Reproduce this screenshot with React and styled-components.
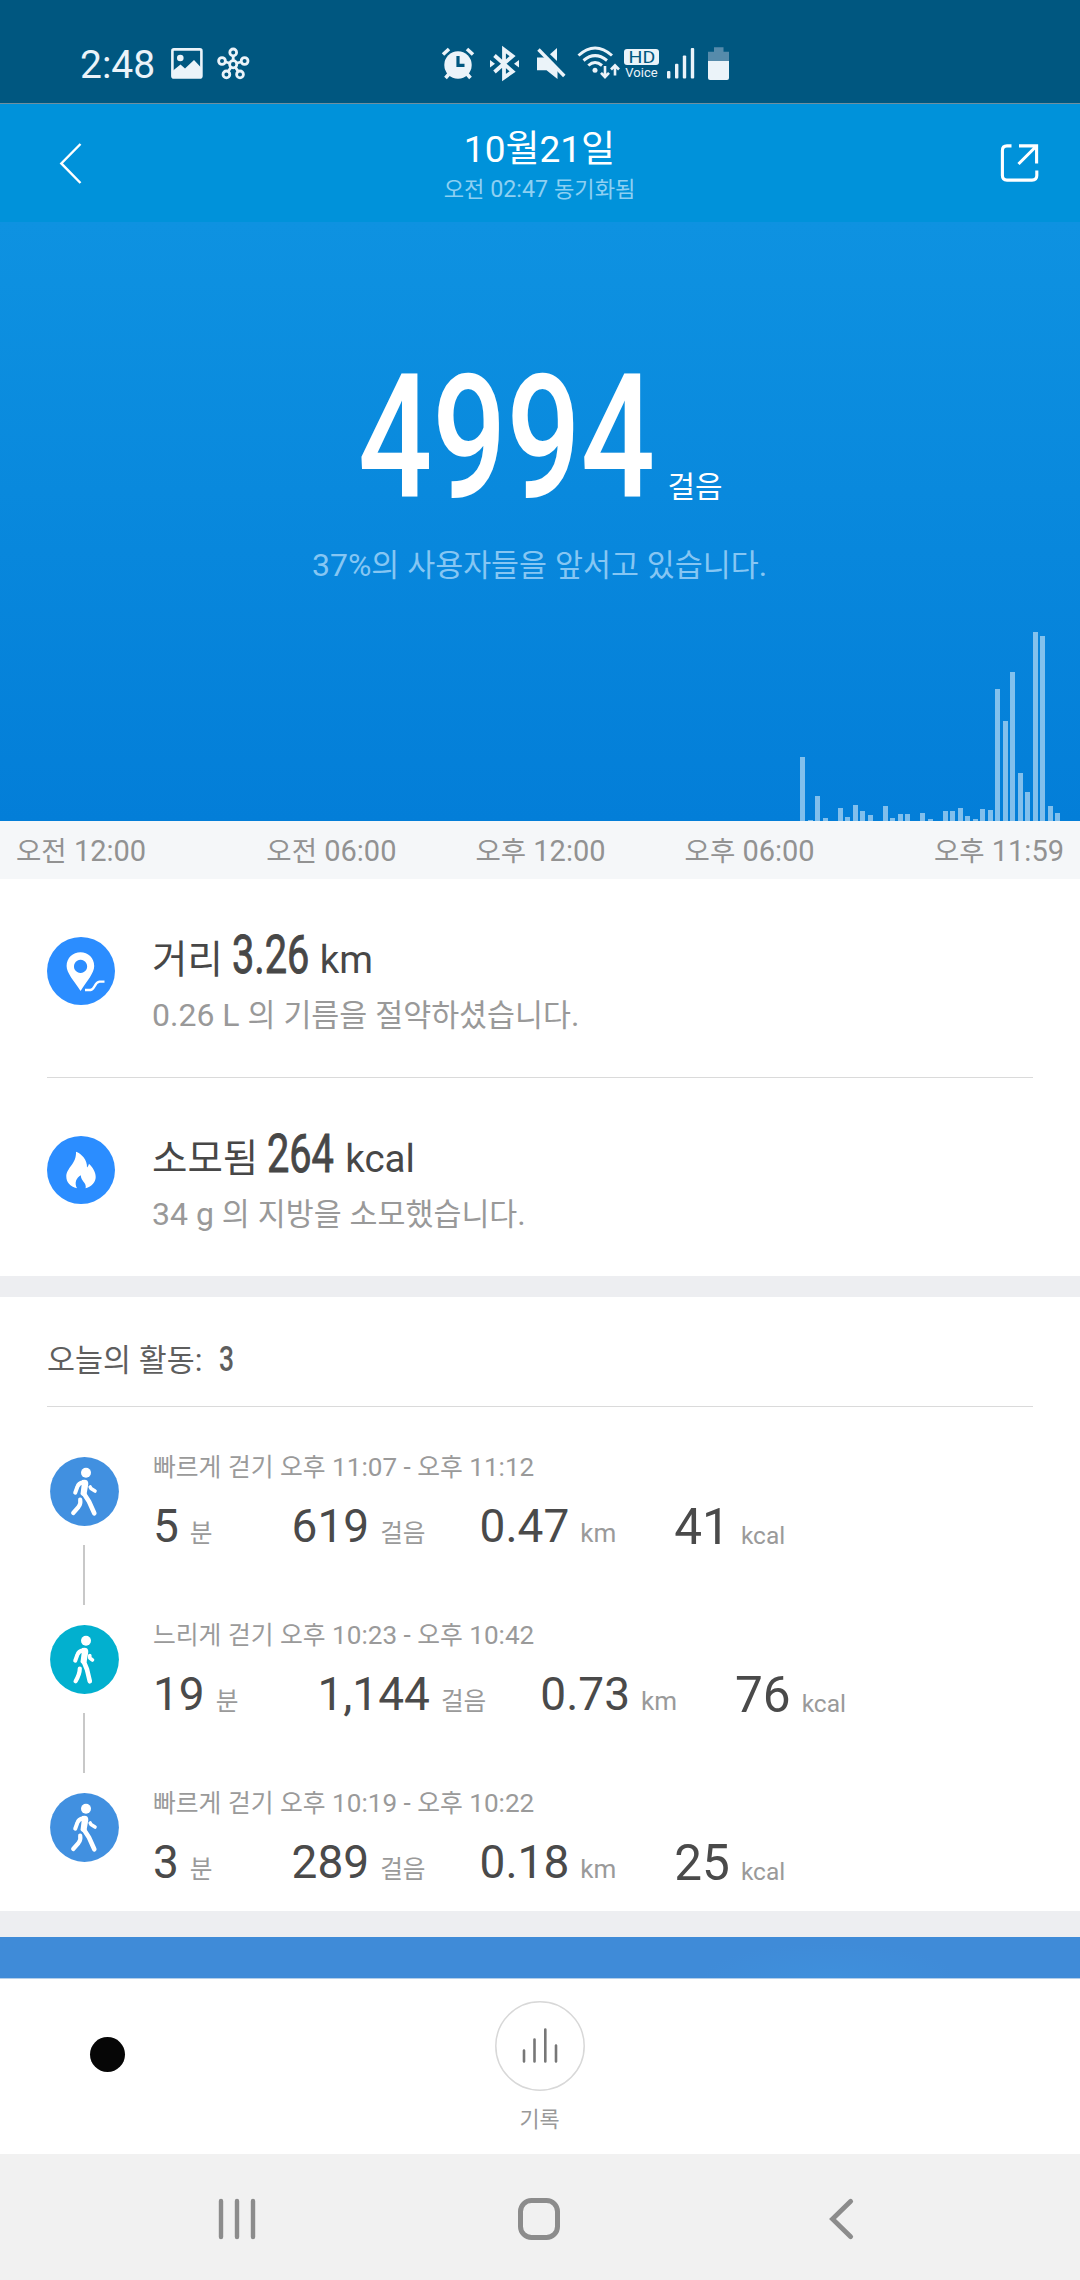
import React from 'react';
import styled, { createGlobalStyle } from 'styled-components';

const GlobalStyle = createGlobalStyle`
  * { box-sizing: border-box; }
  body {
    margin: 0;
    background: #fff;
    font-family: Roboto, "Noto Sans CJK KR", sans-serif;
  }
  svg { display: block; flex: none; }
`;

const Screen = styled.div`
  width: 1080px;
  height: 2280px;
  display: flex;
  flex-direction: column;
  overflow: hidden;
  white-space: nowrap;
`;

/* hangul sits a little smaller next to the latin digits */
const Hangul = styled.span`
  font-size: 0.95em;
`;

/* tall narrow digits */
const Condensed = styled.span`
  display: inline-block;
  width: ${p => p.$w}px;
  font-weight: 500;
  transform: scaleX(0.755);
  transform-origin: left;
`;

const StatusBar = styled.div`
  height: 104px;
  padding: 25px 0 0 80px;
  display: flex;
  align-items: center;
  background: #005780;
  border-bottom: 1px solid #6f8f9f;
  color: #ebf3f9;
`;

const Clock = styled.div`
  width: 91px;
  padding-top: 2px;
  font-size: 39px;
  line-height: 44px;
`;

const StatusIcon = styled.svg`
  height: 40px;
  margin-left: ${p => p.$gap || 0}px;
`;

const HdVoice = styled.div`
  width: 35px;
  margin-left: 4px;
  display: flex;
  flex-direction: column;
  align-items: center;
  font-size: 13px;
  line-height: 15px;
`;

const HdBadge = styled.div`
  width: 35px;
  height: 16px;
  display: flex;
  justify-content: center;
  border-radius: 3px;
  background: #ebf3f9;
  color: #005780;
  font-size: 16px;
  line-height: 17px;
`;

const Wide = styled.span`
  transform: scaleX(1.22);
`;

const Header = styled.header`
  height: 118px;
  display: grid;
  grid-template-columns: 120px 1fr 120px;
  background: #0092da;
  color: #fff;
`;

const HeaderSide = styled.div`
  display: flex;
  align-items: center;
  padding-left: ${p => p.$left}px;
`;

const HeaderText = styled.div`
  padding: 24px 1px 0 0;
  text-align: center;
`;

const DateTitle = styled.div`
  font-size: 37px;
  line-height: 44px;
`;

const Synced = styled.div`
  font-size: 23.3px;
  line-height: 34px;
  color: #8dd0f2;
`;

const Hero = styled.section`
  height: 599px;
  padding-top: 126px;
  display: flex;
  flex-direction: column;
  align-items: center;
  background: linear-gradient(#0e92e1, #037ed8);
  color: #fff;
`;

const StepCount = styled.div`
  display: flex;
  align-items: baseline;
  gap: 15px;
  padding-left: 1px;
  font-size: 173px;
  line-height: 180px;
`;

const StepUnit = styled.span`
  font-size: 31.5px;
  line-height: 40px;
`;

const HeroNote = styled.div`
  margin-top: 15px;
  padding-right: 1px;
  font-size: 32px;
  line-height: 44px;
  color: #86c6f3;
`;

const Chart = styled.div`
  align-self: stretch;
  height: 190px;
  margin-top: auto;
  padding-right: 20px;
  display: flex;
  justify-content: flex-end;
  align-items: flex-end;
  gap: 2.5px;
`;

const Bar = styled.div`
  width: 5px;
  background: rgba(255, 255, 255, 0.5);
`;

const Axis = styled.div`
  height: 58px;
  padding: 3px 16px 0;
  display: flex;
  justify-content: space-between;
  align-items: center;
  background: #f5f7f9;
  color: #929292;
  font-size: 29px;
  line-height: 40px;
`;

const AxisMiddle = styled.div`
  display: flex;
  gap: 79px;
  padding-left: 1px;
`;

const Metric = styled.div`
  height: ${p => (p.$last ? 198 : 199)}px;
  margin: 0 47px;
  padding-top: 58px;
  display: flex;
  gap: 37px;
  border-bottom: ${p => (p.$last ? 'none' : '1px solid #dadada')};
`;

const MetricBody = styled.div`
  margin-top: -12px;
`;

const MetricTitle = styled.div`
  display: flex;
  align-items: baseline;
  gap: 9px;
  color: #474747;
  font-size: 38.5px;
  line-height: 60px;
`;

const MetricValue = styled(Condensed)`
  font-size: 54px;
  font-weight: 400;
  -webkit-text-stroke: 0.9px #474747;
  transform: scaleX(0.735);
`;

const MetricNote = styled.div`
  margin-top: 5px;
  color: #999;
  font-size: 32px;
  line-height: 40px;
`;

const Band = styled.div`
  height: ${p => p.$h}px;
  flex: none;
  background: #edeef1;
`;

const SectionTitle = styled.div`
  height: 110px;
  margin: 0 47px;
  padding-top: 43px;
  display: flex;
  align-items: baseline;
  gap: 16px;
  border-bottom: 1px solid #dadada;
  color: #5e5e5e;
  font-size: 32px;
  line-height: 40px;
`;

const SectionCount = styled(Condensed)`
  font-size: 35px;
`;

const Activities = styled.div`
  padding-top: 50px;
`;

const Activity = styled.div`
  height: 168px;
  padding-left: 49px;
  display: flex;
  gap: 34px;
  &:last-child { height: 118px; }
`;

const Track = styled.div`
  width: 70px;
  display: flex;
  flex-direction: column;
  align-items: center;
`;

const Connector = styled.div`
  width: 2px;
  height: 60px;
  margin-top: 19px;
  background: #c8c8c8;
`;

const ActivityBody = styled.div`
  margin-top: -5px;
`;

const ActivityName = styled.div`
  color: #9a9a9a;
  font-size: 26.1px;
  line-height: 30px;
`;

const Stats = styled.div`
  margin-top: 15px;
  display: flex;
  align-items: flex-start;
`;

const Stat = styled.div`
  margin: ${p => p.$top || 0}px ${p => p.$after || 0}px 0 0;
  display: flex;
  align-items: baseline;
  gap: 11px;
  color: #4a4a4a;
  font-size: ${p => p.$size || 46}px;
  line-height: 56px;
`;

const StatUnit = styled.span`
  color: #9a9a9a;
  font-size: ${p => p.$size || 26}px;
`;

const Promo = styled.div`
  height: 42px;
  flex: none;
  background: radial-gradient(ellipse 130px 36px at 830px 42px, #3f90dc, #3f8bd8);
  border-bottom: 1px solid #b3cfea;
`;

const Footer = styled.div`
  height: 175px;
  display: grid;
  grid-template-columns: 1fr 120px 1fr;
  padding-right: 1px;
  background: #fff;
`;

const FooterSide = styled.div`
  padding: 58px 0 0 90px;
`;

const Dot = styled.div`
  width: 35px;
  height: 35px;
  border-radius: 50%;
  background: #060606;
`;

const HistoryButton = styled.div`
  padding-top: 22px;
  display: flex;
  flex-direction: column;
  align-items: center;
  color: #999;
  font-size: 23px;
  line-height: 30px;
`;

const HistoryLabel = styled.div`
  margin-top: 14px;
`;

const NavBar = styled.nav`
  height: 126px;
  padding: 3px 2px 0 0;
  display: flex;
  justify-content: center;
  align-items: center;
  gap: 258px;
  background: #f1f1f1;
`;

// wraps every hangul run of a label
const mixed = text =>
  text.split(/([가-힣]+)/).map((part, i) => (i % 2 ? <Hangul key={i}>{part}</Hangul> : part));

const bars = [
  64, 1, 25, 3, 0, 13, 4, 16.5, 10, 6, 0, 15.5, 3, 7, 7, 0, 8, 2, 0, 10.5, 10.5, 13,
  5, 2, 12, 11, 132, 100, 149.5, 48.5, 29, 189, 185, 15, 8,
];

const activities = [
  { name: '빠르게 걷기 오후 11:07 - 오후 11:12', min: '5', steps: '619', km: '0.47', kcal: '41' },
  { name: '느리게 걷기 오후 10:23 - 오후 10:42', min: '19', steps: '1,144', km: '0.73', kcal: '76', slow: true },
  { name: '빠르게 걷기 오후 10:19 - 오후 10:22', min: '3', steps: '289', km: '0.18', kcal: '25' },
];

function Walker({ slow }) {
  return (
    <svg width="69" height="69" viewBox="0 0 69 69" fill="none" stroke="#fff" strokeLinecap="round" strokeLinejoin="round">
      <circle cx="34.5" cy="34.5" r="34.4" fill={slow ? '#02b0cf' : '#4190e0'} stroke="none" />
      <circle cx="36" cy="15.7" r="5" fill="#fff" stroke="none" />
      <path d="M32 23 Q38.5 21.5 38.3 27 L36.6 37 Q33 41 30.5 37 L31.5 29 Z" fill="#fff" stroke="none" />
      <path d="M33 25.2 Q28.5 26 27.3 30 L25.2 35.7" strokeWidth="4" />
      {slow ? (
        <>
          <path d="M39.8 30.5 V33 L42.5 35" strokeWidth="3.6" />
          <path d="M33.5 36 L37 44.5 L39.8 56.3" strokeWidth="4.6" />
          <path d="M29.8 43.5 Q29.8 49 25.6 56.3" strokeWidth="4.2" />
        </>
      ) : (
        <>
          <path d="M40.2 30 L41 31.5 L45 34" strokeWidth="3.6" />
          <path d="M33.5 36 L39 44.5 L44.3 56.3" strokeWidth="4.6" />
          <path d="M30.2 42.5 Q31 47 28.5 50 L23.2 56" strokeWidth="4.2" />
        </>
      )}
    </svg>
  );
}

function DistanceIcon() {
  return (
    <svg width="68" height="68" viewBox="0 0 68 68">
      <circle cx="34" cy="34" r="34" fill="#2b8dff" />
      <path
        d="M33.5 15.3 C41 15.3 47.2 21 47.2 29 C47.2 36 40 44 33.6 54 C27 44 19.6 36 19.6 29 C19.6 21 26 15.3 33.5 15.3 Z M33.5 22.8 A6.6 6.6 0 1 0 33.6 22.8 Z"
        fill="#fff"
        fillRule="evenodd"
      />
      <path d="M38 53 H43.5 C48.5 52 47 45.5 52.5 44.6 H57.5" fill="none" stroke="#fff" strokeWidth="2.4" />
    </svg>
  );
}

function FlameIcon() {
  return (
    <svg width="68" height="68" viewBox="0 0 68 68">
      <circle cx="34" cy="34" r="34" fill="#2b8dff" />
      <path
        d="M29 15.7 C34 17.5 40.5 23.5 40 31.5 C41 30.5 41.6 29.5 41.9 27.8 C45.5 31 48.7 36 48.7 41 C48.7 46 45 50.5 38.6 52.3 C40 47 33.8 45 33.8 39.3 C29.5 42 27 46.5 30 52.3 C23 50.5 19.3 46 19.3 40.5 C19.3 31.5 29.5 28.5 29 15.7 Z"
        fill="#fff"
      />
    </svg>
  );
}

function Status() {
  const light = '#ebf3f9';
  return (
    <StatusBar>
      <Clock>2:48</Clock>
      <StatusIcon width="32" viewBox="171 44 32 40">
        <rect x="172.4" y="49.4" width="29" height="28" rx="1.5" fill="none" stroke={light} strokeWidth="2.6" />
        <circle cx="180.3" cy="58" r="3.3" fill={light} />
        <path d="M172.5 71 L180.5 64.5 L185 68.5 L194 60 L201.5 68 V77.5 H172.5 Z" fill={light} />
      </StatusIcon>
      <StatusIcon width="34" $gap={13} viewBox="216 44 34 40" fill="none" stroke={light} strokeWidth="2.8">
        <path d="M233.2 56 V60 M225.5 62 L229.3 63 M241 62 L237 63 M228.3 71.3 L230.8 67.5 M238 71.3 L235.6 67.5" />
        <circle cx="233.2" cy="64.3" r="3.6" />
        <circle cx="233.2" cy="52.4" r="3.4" />
        <circle cx="222" cy="61" r="3.4" />
        <circle cx="244.6" cy="61" r="3.4" />
        <circle cx="226.4" cy="74.4" r="3.4" />
        <circle cx="240" cy="74.4" r="3.4" />
      </StatusIcon>
      <StatusIcon width="36" $gap={190} viewBox="440 44 36 40">
        <circle cx="458" cy="65" r="13.7" fill={light} />
        <path d="M443 54.5 L449 49 M467 49 L473 54.5 M449 74 L445.5 78 M467 74 L470.5 78" stroke={light} strokeWidth="3.6" />
        <path d="M458 56 V65.3 H464.5" fill="none" stroke="#005780" strokeWidth="3.2" />
      </StatusIcon>
      <StatusIcon width="33" $gap={12} viewBox="488 44 33 40">
        <path d="M494.5 55.5 L512.6 71.5 L504 77.5 V49.5 L512.6 56 L494.5 72" fill="none" stroke={light} strokeWidth="3.8" />
        <path d="M490 60 L495 63.8 L490 67.6 Z M519 60 L514 63.8 L519 67.6 Z" fill={light} />
      </StatusIcon>
      <StatusIcon width="32" $gap={14} viewBox="535 44 32 40" fill={light}>
        <path d="M557 48 V61 L550 54.2 Z" />
        <path d="M537 57.5 H546 L557.5 68 V79 L546.5 70.2 H537 Z" />
        <path d="M538.5 49.5 L564.3 76" stroke={light} strokeWidth="3.4" />
      </StatusIcon>
      <StatusIcon width="43" $gap={10} viewBox="577 44 43 40" fill="none" stroke={light} strokeWidth="3">
        <path d="M578.5 55.5 Q595 40.5 612 55.5 M583.5 60.5 Q595 50.8 607 60.5 M588.3 65.5 Q595 59.5 602 65.5" />
        <circle cx="595" cy="70.3" r="2.5" fill={light} stroke="none" />
        <path d="M605 66 V77 M601 72.8 L605 77 L609 72.8 M615 75.5 V65.5 M611 69.5 L615 65.3 L619 69.5" strokeWidth="2.6" />
      </StatusIcon>
      <HdVoice>
        <HdBadge><Wide>HD</Wide></HdBadge>
        Voice
      </HdVoice>
      <StatusIcon width="29" $gap={7} viewBox="666 44 29 40" fill={light}>
        <rect x="667" y="71" width="3.4" height="7.4" rx="1" />
        <rect x="675" y="63.7" width="3.4" height="14.7" rx="1" />
        <rect x="682.8" y="55.5" width="3.4" height="22.9" rx="1" />
        <rect x="690.8" y="48" width="3.4" height="30.4" rx="1" />
      </StatusIcon>
      <StatusIcon width="21" $gap={13} viewBox="708 44 21 40">
        <path d="M714 47.3 H723.5 V51.7 H729 V61 H708 V51.7 H714 Z" fill="#568bab" />
        <path d="M708 61 H729 V78 Q729 80 727 80 H710 Q708 80 708 78 Z" fill={light} />
      </StatusIcon>
    </StatusBar>
  );
}

function App() {
  return (
    <Screen>
      <GlobalStyle />
      <Status />

      <Header>
        <HeaderSide $left={58}>
          <svg width="26" height="42" viewBox="58 142 26 42" fill="none" stroke="#fff" strokeWidth="2.4">
            <path d="M80.5 144 L61.3 163.4 L80.5 183" />
          </svg>
        </HeaderSide>
        <HeaderText>
          <DateTitle>10월21일</DateTitle>
          <Synced>{mixed('오전 02:47 동기화됨')}</Synced>
        </HeaderText>
        <HeaderSide $left={40}>
          <svg width="40" height="40" viewBox="1000 143.5 40 40" fill="none" stroke="#fff" strokeWidth="3.1">
            <path d="M1011.5 146.4 H1007 Q1002.4 146.4 1002.4 151 V176 Q1002.4 180.6 1007 180.6 H1032 Q1036.8 180.6 1036.8 176 V171" />
            <path d="M1019 146.4 H1036.6 V164 M1036 147 L1018.5 164.5" />
          </svg>
        </HeaderSide>
      </Header>

      <Hero>
        <StepCount>
          <Condensed $w={294}>4994</Condensed>
          <StepUnit>{mixed('걸음')}</StepUnit>
        </StepCount>
        <HeroNote>{mixed('37%의 사용자들을 앞서고 있습니다.')}</HeroNote>
        <Chart>
          {bars.map((h, i) => <Bar key={i} style={{ height: h }} />)}
        </Chart>
      </Hero>

      <Axis>
        <div>{mixed('오전 12:00')}</div>
        <AxisMiddle>
          <div>{mixed('오전 06:00')}</div>
          <div>{mixed('오후 12:00')}</div>
          <div>{mixed('오후 06:00')}</div>
        </AxisMiddle>
        <div>{mixed('오후 11:59')}</div>
      </Axis>

      <Metric>
        <DistanceIcon />
        <MetricBody>
          <MetricTitle>
            <span>거리</span>
            <MetricValue $w={79}>3.26</MetricValue>
            <span>km</span>
          </MetricTitle>
          <MetricNote>{mixed('0.26 L 의 기름을 절약하셨습니다.')}</MetricNote>
        </MetricBody>
      </Metric>
      <Metric $last>
        <FlameIcon />
        <MetricBody>
          <MetricTitle>
            <span>소모됨</span>
            <MetricValue $w={69}>264</MetricValue>
            <span>kcal</span>
          </MetricTitle>
          <MetricNote>{mixed('34 g 의 지방을 소모했습니다.')}</MetricNote>
        </MetricBody>
      </Metric>

      <Band $h={21} />

      <SectionTitle>
        <span>{mixed('오늘의 활동:')}</span>
        <SectionCount $w={16}>3</SectionCount>
      </SectionTitle>
      <Activities>
        {activities.map((a, i) => (
          <Activity key={a.name}>
            <Track>
              <Walker slow={a.slow} />
              {i < activities.length - 1 && <Connector />}
            </Track>
            <ActivityBody>
              <ActivityName>{mixed(a.name)}</ActivityName>
              <Stats>
                <Stat $after={79}>{a.min}<StatUnit>{mixed('분')}</StatUnit></Stat>
                <Stat $after={54}>{a.steps}<StatUnit>{mixed('걸음')}</StatUnit></Stat>
                <Stat $after={58}>{a.km}<StatUnit>km</StatUnit></Stat>
                <Stat $top={1} $size={49.5}>{a.kcal}<StatUnit $size={24.5}>kcal</StatUnit></Stat>
              </Stats>
            </ActivityBody>
          </Activity>
        ))}
      </Activities>

      <Band $h={26} />
      <Promo />

      <Footer>
        <FooterSide>
          <Dot />
        </FooterSide>
        <HistoryButton>
          <svg width="90" height="90" viewBox="0 0 90 90" fill="none" strokeLinecap="round">
            <circle cx="45" cy="45" r="44.2" stroke="#d8d8d8" strokeWidth="1.5" />
            <path d="M29 49.5 V60.5 M39.5 38.5 V60.5 M50.3 28.5 V60.5 M61 44.5 V60.5" stroke="#777" strokeWidth="2.6" />
          </svg>
          <HistoryLabel>{mixed('기록')}</HistoryLabel>
        </HistoryButton>
      </Footer>

      <NavBar>
        <svg width="44" height="44" viewBox="215 2197 44 44" stroke="#8c8c8c" strokeWidth="4.4" strokeLinecap="round">
          <path d="M221 2201 V2237 M237 2201 V2237 M253 2201 V2237" />
        </svg>
        <svg width="44" height="44" viewBox="0 0 44 44" fill="none" stroke="#8c8c8c" strokeWidth="5">
          <rect x="3.5" y="3.5" width="37" height="37" rx="11" />
        </svg>
        <svg width="44" height="44" viewBox="819 2197 44 44" fill="none" stroke="#8c8c8c" strokeWidth="4.8" strokeLinecap="round">
          <path d="M850.7 2201.3 L832.5 2219 L850.7 2236.7" />
        </svg>
      </NavBar>
    </Screen>
  );
}

export default App;
